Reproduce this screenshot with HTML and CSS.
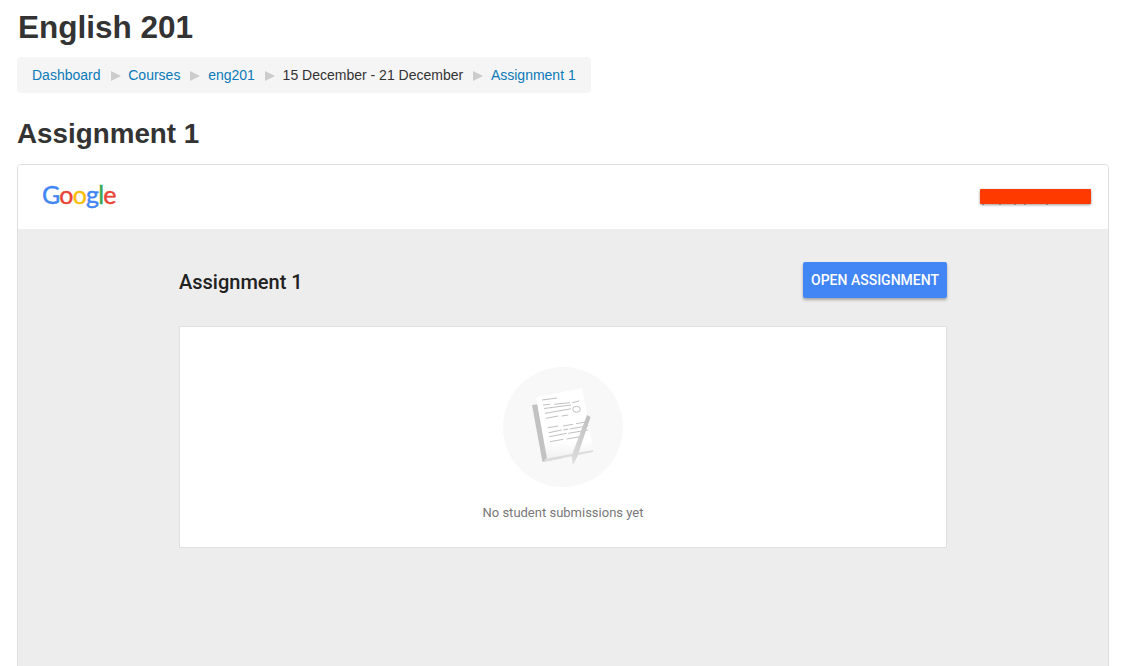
FILE: index.html
```html
<!DOCTYPE html>
<html lang="en">
<head>
<meta charset="utf-8">
<title>Assignment 1</title>
<link rel="stylesheet" href="styles.css">
</head>
<body>
<header class="course-header">
  <h1 class="course-title">English 201</h1>
  <nav class="breadcrumb">
    <a href="#">Dashboard</a><span class="sep"></span>
    <a href="#">Courses</a><span class="sep"></span>
    <a href="#">eng201</a><span class="sep"></span>
    <span class="crumb-text">15 December - 21 December</span><span class="sep"></span>
    <a href="#">Assignment 1</a>
  </nav>
</header>
<h2 class="page-title">Assignment 1</h2>
<section class="frame">
  <div class="frame-top">
    <div class="logo"><span class="g-blue">G</span><span class="g-red">o</span><span class="g-yellow">o</span><span class="g-blue">g</span><span class="g-green">l</span><span class="g-red">e</span></div>
    <div class="redaction"></div>
  </div>
  <div class="frame-body">
    <div class="column">
      <div class="title-row">
        <div class="assign-title">Assignment 1</div>
        <button class="open-btn">OPEN ASSIGNMENT</button>
      </div>
      <div class="panel">
        <div class="circle">
          <svg class="paper-icon" width="120" height="120" viewBox="0 0 120 120">
            <defs>
              <linearGradient id="sheet" x1="0" y1="0" x2="0" y2="1">
                <stop offset="0.75" stop-color="#ffffff"/>
                <stop offset="1" stop-color="#f1f1f1"/>
              </linearGradient>
              <linearGradient id="pen" x1="1" y1="0" x2="0" y2="1">
                <stop offset="0" stop-color="#bdbdbd"/>
                <stop offset="1" stop-color="#dedede"/>
              </linearGradient>
            </defs>
            <path d="M29 38 L39.500 95 L60 91 L45 36 Z" fill="#c2c2c2"/>
            <path d="M40 95 L90 85 L90 83 L44 90 Z" fill="#dcdcdc"/>
            <path d="M33 30.500 L79 21 L90 83 L44 91.500 Z" fill="url(#sheet)"/>
            <g stroke="#c0c0c0" stroke-width="1" fill="none">
              <path d="M39 33 L54 31"/>
              <path d="M40 38 L47 37.300 M51.300 37.300 L67 35.700 M69.300 35.700 L76.300 34"/>
              <path d="M41 41.500 L68 38"/>
              <path d="M42 46.300 L68 41.800"/>
              <path d="M43 51.300 L55.300 49 M58.700 49 L65.300 48"/>
              <path d="M44.700 60.700 L55.300 59 M60 59 L70 57.300 M73 56.700 L84 54.700"/>
              <path d="M45.700 65.700 L58.700 63 M60.300 63 L65.300 62 M67 62 L85.300 58.700"/>
              <path d="M46.300 69.700 L63.700 66.300 M65.300 66.300 L85.300 63"/>
              <path d="M47 74.700 L60.300 72.300 M63.700 72 L77 69.700"/>
            </g>
            <ellipse cx="73.500" cy="42.300" rx="3.800" ry="3" fill="none" stroke="#c0c0c0" stroke-width="1"/>
            <path d="M84 48 L87.500 50 L74.500 89 L70 98 L68.500 89 Z" fill="url(#pen)"/>
          </svg>
        </div>
        <p class="empty-text">No student submissions yet</p>
      </div>
    </div>
  </div>
</section>
</body>
</html>
```
FILE: styles.css
```css
* { box-sizing: border-box; }
html, body { height: 100%; }
body {
  margin: 0;
  padding: 0 12px 0 17px;
  overflow: hidden;
  background: #fff;
  color: #333;
  font-family: "Liberation Sans", Arial, sans-serif;
  font-size: 14px;
}
.course-header { padding-top: 10px; }
.course-title {
  margin: 0 0 13px 1px;
  font-size: 31.500px;
  line-height: 34px;
  font-weight: 700;
  color: #333;
}
.breadcrumb {
  display: flex;
  align-items: center;
  width: 574px;
  height: 36px;
  padding: 0 15px;
  background: #f5f5f5;
  border-radius: 4px;
  white-space: nowrap;
  line-height: 20px;
}
.breadcrumb a { color: #0a7ab8; text-decoration: none; }
.crumb-text { color: #333; }
.sep {
  width: 10px;
  height: 10px;
  margin: 1px 7.750px 0 10px;
  border-left: 10px solid #ccc;
  border-top: 5px solid transparent;
  border-bottom: 5px solid transparent;
}
.page-title {
  margin: 25px 0 14px;
  font-size: 27.800px;
  line-height: 32px;
  font-weight: 700;
  color: #333;
}
.frame {
  display: flex;
  flex-direction: column;
  height: 560px;
  border: 1px solid #ddd;
  border-radius: 4px;
  overflow: hidden;
}
.frame-top {
  display: flex;
  align-items: center;
  justify-content: space-between;
  flex: none;
  height: 64px;
  padding: 0 17px 0 24px;
  background: #fff;
}
.logo {
  margin-top: -6px;
  font-family: Lato, sans-serif;
  font-size: 25px;
  line-height: 30px;
  letter-spacing: -0.800px;
  -webkit-text-stroke: 0.400px currentColor;
}
.g-blue { color: #4285f4; }
.g-red { color: #ea4335; }
.g-yellow { color: #fbbc05; }
.g-green { color: #34a853; }
.redaction {
  position: relative;
  width: 111px;
  height: 15px;
  margin-top: -2px;
  background: #ff3a00;
  border-radius: 1px;
  box-shadow: 0 1px 3px rgba(0, 0, 0, 0.4);
}
.redaction::after {
  content: "";
  position: absolute;
  left: 2px;
  bottom: -1px;
  width: 2px;
  height: 1px;
  background: #888;
  box-shadow: 17px 0 #888, 32px 0 #888, 42px 0 #888, 64px 0 #888;
}
.frame-body {
  flex: 1;
  display: flex;
  justify-content: center;
  padding-right: 2px;
  background: #ededed;
}
.column { width: 768px; margin-left: 2px; }
.title-row {
  display: flex;
  align-items: flex-start;
  justify-content: space-between;
  height: 97px;
  padding-top: 33px;
}
.assign-title {
  padding-top: 8px;
  font-family: Roboto, sans-serif;
  font-size: 20px;
  line-height: 24px;
  font-weight: 500;
  color: #212121;
}
.open-btn {
  width: 144px;
  height: 36px;
  padding: 0;
  border: 0;
  border-radius: 2px;
  background: #4285f4;
  color: #fff;
  font-family: Roboto, sans-serif;
  font-size: 14px;
  font-weight: 500;
  box-shadow: 0 2px 3px rgba(0, 0, 0, 0.3);
}
.panel {
  display: flex;
  flex-direction: column;
  align-items: center;
  height: 222px;
  padding-top: 40px;
  background: #fff;
  border: 1px solid #e0e0e0;
}
.circle {
  width: 120px;
  height: 120px;
  border-radius: 50%;
  background: #f8f8f8;
}
.paper-icon { display: block; }
.empty-text {
  margin: 17px 0 0;
  font-family: Roboto, sans-serif;
  font-size: 13px;
  line-height: 18px;
  color: #777;
}
```
